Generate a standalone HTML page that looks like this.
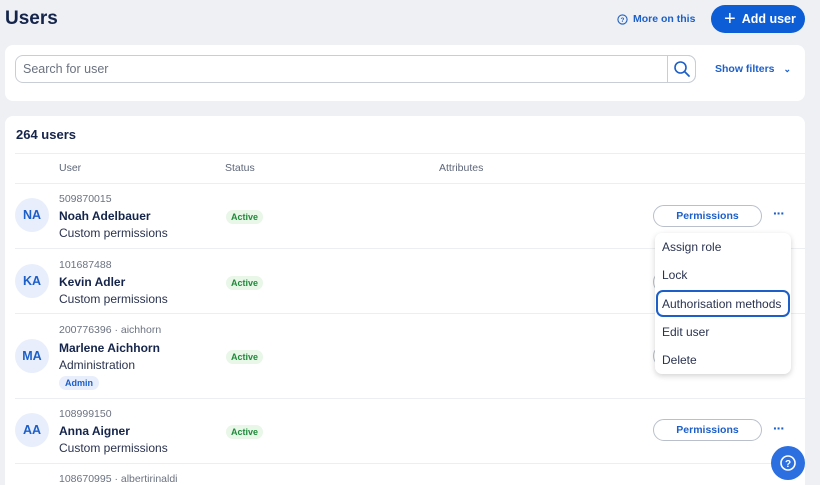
<!DOCTYPE html>
<html><head><style>
*{box-sizing:border-box;margin:0;padding:0}
html,body{width:820px;height:485px;overflow:hidden}
body{background:#eef0f3;font-family:"Liberation Sans",sans-serif;color:#1b2440;position:relative}
.a{position:absolute}
.card{background:#fff;border-radius:8px}
.hd{font-size:10.5px;color:#5d6679}
.id{font-size:10.5px;color:#6b7280}
.nm{font-size:12px;font-weight:bold;color:#14244a}
.sb{font-size:12px;color:#2a3350}
.av{width:34px;height:34px;border-radius:50%;background:#e8eefb;color:#1c5fc8;font-weight:bold;font-size:12.5px;text-align:center;line-height:34px}
.act{background:#e8f7e8;color:#1f8a3a;font-size:9px;font-weight:bold;padding:2px 5px;border-radius:8px}
.perm{width:109px;height:22px;border:1.5px solid #b9c0cc;border-radius:11px;color:#1c5fc8;font-size:10.5px;font-weight:bold;text-align:center;line-height:20px}
.dots{color:#1c5fc8;font-size:14px;font-weight:bold;letter-spacing:-1px}
.line{height:1px;background:#eceef1;left:15px;width:790px}
.mi{font-size:12px;color:#2a3350;left:662px}
</style></head><body>
<div class="a" style="left:5px;top:8px;font-size:19px;font-weight:bold;color:#14244a">Users</div>
<div class="a" style="left:617px;top:13px;font-size:10.5px;font-weight:bold;color:#1c5fc8;display:flex;align-items:center;gap:5px"><svg width="11" height="11" viewBox="0 0 12 12"><circle cx="6" cy="6" r="5" fill="none" stroke="#1c5fc8" stroke-width="1.2"/><text x="6" y="8.5" font-size="7" text-anchor="middle" fill="#1c5fc8" font-family="Liberation Sans" font-weight="bold">?</text></svg>More on this</div>
<div class="a" style="left:711px;top:5px;width:94px;height:28px;border-radius:14px;background:#0c5dd6;color:#fff;font-weight:bold;font-size:12.5px;line-height:28px;padding-left:13px"><span style="font-size:20px;font-weight:normal;vertical-align:-2px;margin-right:6px">+</span>Add user</div>

<div class="a card" style="left:5px;top:45px;width:800px;height:56px"></div>
<div class="a" style="left:15px;top:55px;width:681px;height:28px;border:1.5px solid #c9ced6;border-radius:8px;background:#fff"></div>
<div class="a" style="left:23px;top:62px;font-size:12.5px;color:#6b7280">Search for user</div>
<div class="a" style="left:667px;top:55px;width:29px;height:28px;border:1.5px solid #c9ced6;border-radius:0 8px 8px 0"></div>
<svg class="a" style="left:673px;top:60px" width="18" height="18" viewBox="0 0 18 18"><circle cx="7.5" cy="7.5" r="5.5" fill="none" stroke="#1c5fc8" stroke-width="1.6"/><path d="M11.5 11.5L16 16" stroke="#1c5fc8" stroke-width="1.8" stroke-linecap="round"/></svg>
<div class="a" style="left:715px;top:63px;font-size:10.5px;font-weight:bold;color:#1c5fc8">Show filters <span style="margin-left:6px;font-size:9px">&#8964;</span></div>

<div class="a card" style="left:5px;top:116px;width:800px;height:369px;border-radius:8px 8px 0 0"></div>
<div class="a" style="left:16px;top:127px;font-size:13px;font-weight:bold;color:#14244a">264 users</div>
<div class="a line" style="top:153px"></div>
<div class="a hd" style="left:59px;top:162px">User</div>
<div class="a hd" style="left:225px;top:162px">Status</div>
<div class="a hd" style="left:439px;top:162px">Attributes</div>
<div class="a line" style="top:183px"></div>

<div class="a av" style="left:15px;top:198px">NA</div>
<div class="a id" style="left:59px;top:193px">509870015</div>
<div class="a nm" style="left:59px;top:209px">Noah Adelbauer</div>
<div class="a sb" style="left:59px;top:226px">Custom permissions</div>
<div class="a act" style="left:226px;top:210px">Active</div>
<div class="a perm" style="left:653px;top:205px">Permissions</div>
<div class="a dots" style="left:773px;top:205px">···</div>
<div class="a line" style="top:248px"></div>

<div class="a av" style="left:15px;top:264px">KA</div>
<div class="a id" style="left:59px;top:259px">101687488</div>
<div class="a nm" style="left:59px;top:275px">Kevin Adler</div>
<div class="a sb" style="left:59px;top:292px">Custom permissions</div>
<div class="a act" style="left:226px;top:276px">Active</div>
<div class="a perm" style="left:653px;top:271px">Permissions</div>
<div class="a line" style="top:313px"></div>

<div class="a av" style="left:15px;top:339px">MA</div>
<div class="a id" style="left:59px;top:324px">200776396 · aichhorn</div>
<div class="a nm" style="left:59px;top:341px">Marlene Aichhorn</div>
<div class="a sb" style="left:59px;top:358px">Administration</div>
<div class="a" style="left:59px;top:376px;background:#e8eefb;color:#1c5fc8;font-size:9px;font-weight:bold;padding:2px 6px;border-radius:8px">Admin</div>
<div class="a act" style="left:226px;top:350px">Active</div>
<div class="a perm" style="left:653px;top:345px">Permissions</div>
<div class="a line" style="top:398px"></div>

<div class="a av" style="left:15px;top:413px">AA</div>
<div class="a id" style="left:59px;top:408px">108999150</div>
<div class="a nm" style="left:59px;top:424px">Anna Aigner</div>
<div class="a sb" style="left:59px;top:441px">Custom permissions</div>
<div class="a act" style="left:226px;top:425px">Active</div>
<div class="a perm" style="left:653px;top:419px">Permissions</div>
<div class="a dots" style="left:773px;top:420px">···</div>
<div class="a line" style="top:463px"></div>
<div class="a id" style="left:59px;top:473px">108670995 · albertirinaldi</div>

<div class="a" style="left:655px;top:233px;width:136px;height:141px;background:#fff;border-radius:7px;box-shadow:0 2px 6px rgba(0,0,0,.18)"></div>
<div class="a mi" style="top:240px">Assign role</div>
<div class="a mi" style="top:268px">Lock</div>
<div class="a" style="left:656px;top:290px;width:134px;height:27px;border:2px solid #1c5fc8;border-radius:7px"></div>
<div class="a mi" style="top:297px">Authorisation methods</div>
<div class="a mi" style="top:325px">Edit user</div>
<div class="a mi" style="top:353px">Delete</div>

<div class="a" style="left:771px;top:446px;width:34px;height:34px;border-radius:50%;background:#2b6fe0"></div>
<svg class="a" style="left:779px;top:454px" width="18" height="18" viewBox="0 0 18 18"><circle cx="9" cy="9" r="7" fill="none" stroke="#fff" stroke-width="1.6"/><text x="9" y="13" font-size="10" text-anchor="middle" fill="#fff" font-family="Liberation Sans" font-weight="bold">?</text></svg>
</body></html>
